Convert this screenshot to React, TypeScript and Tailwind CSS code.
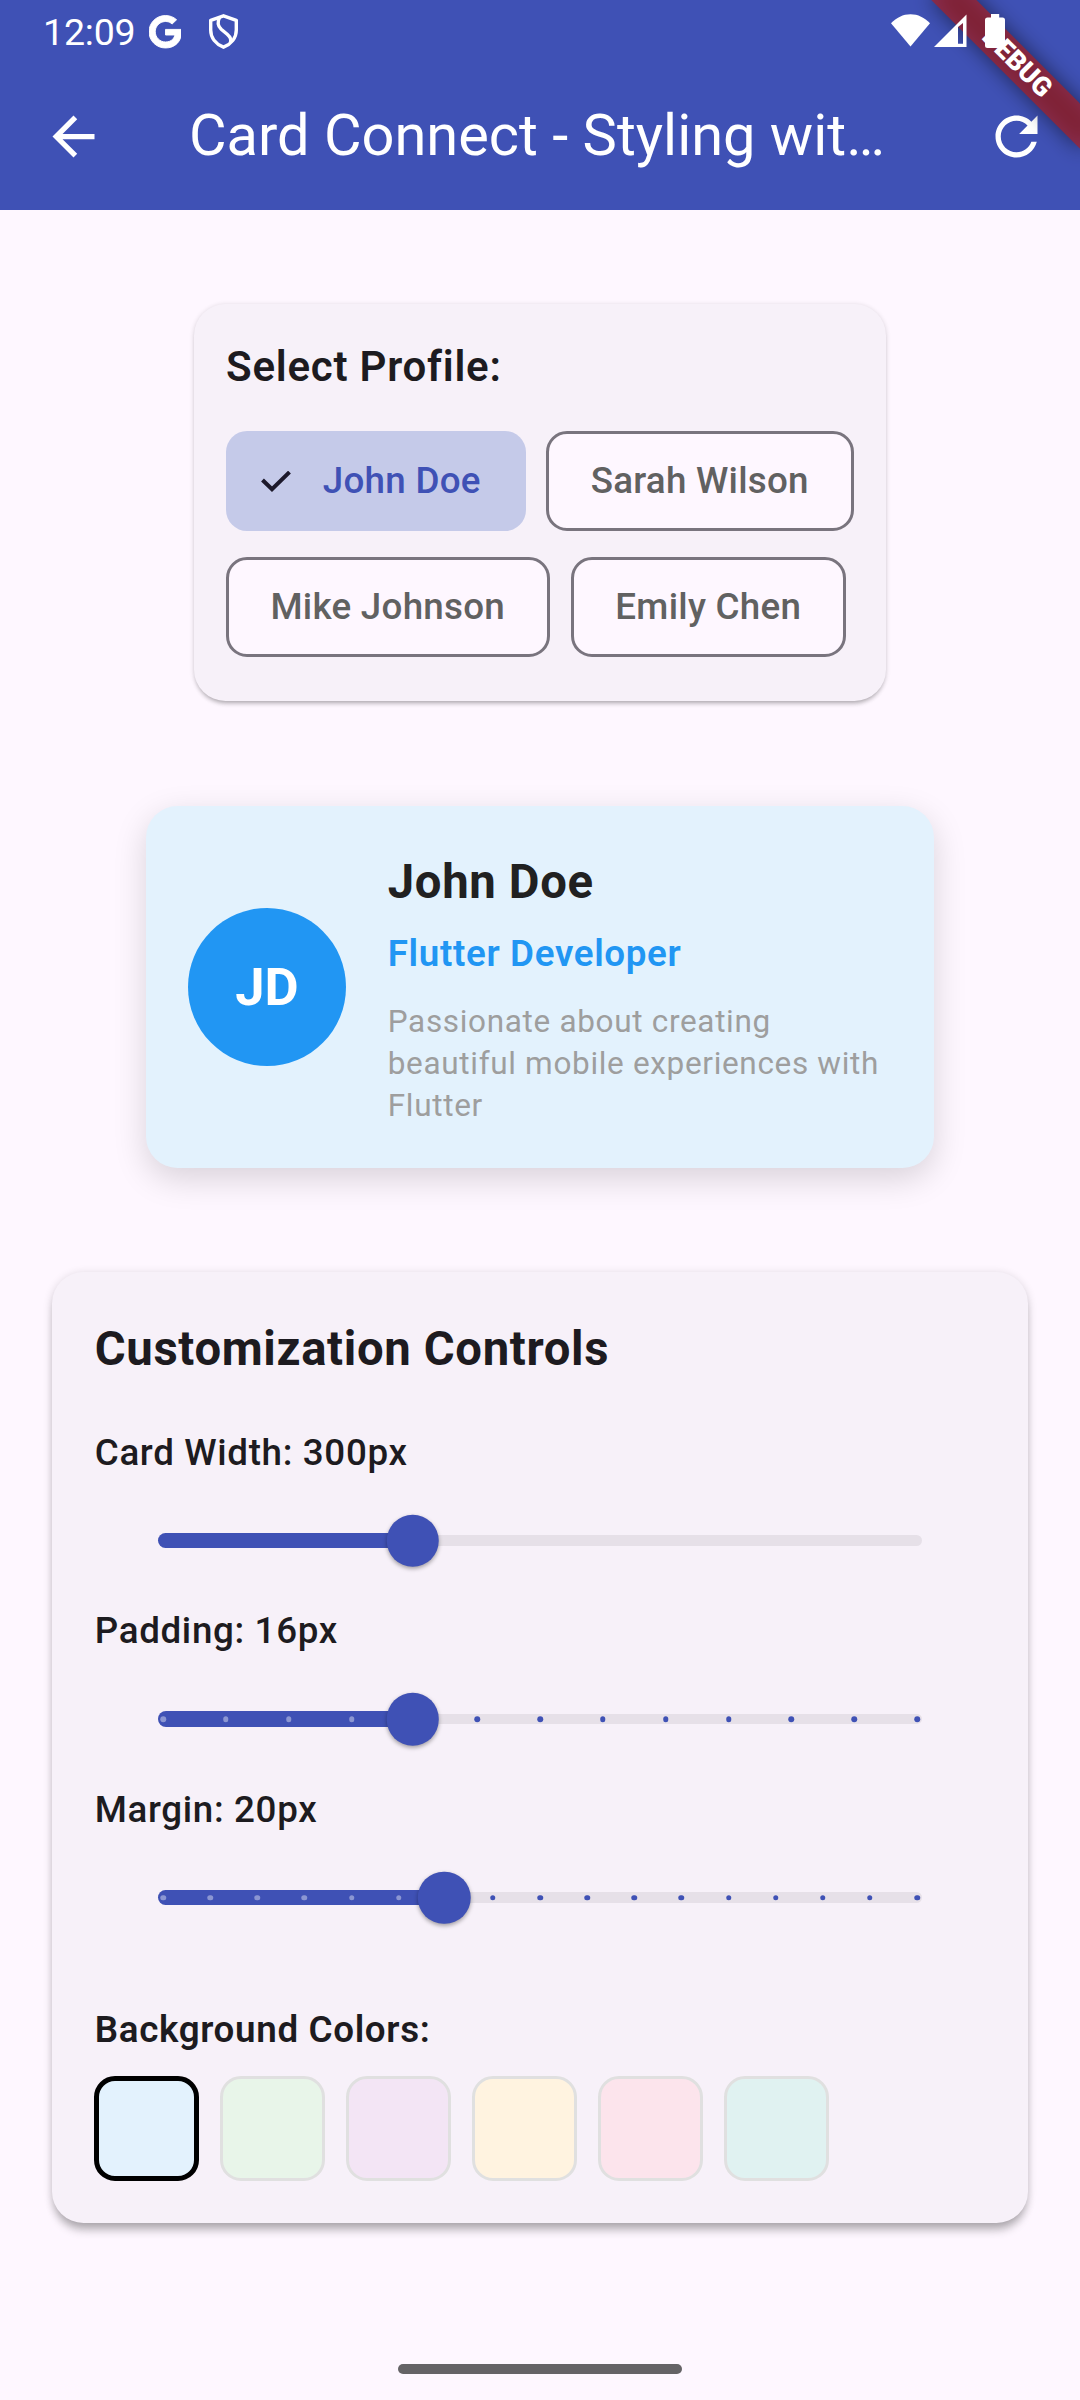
import React from "react";

function StatusBar() {
  return (
    <div className="absolute inset-x-0 top-0 z-30 flex h-[63px] items-start text-white">
      <div className="ml-[43px] mt-[10px] w-[94px] text-[37.5px] leading-[44px] tracking-[-0.2px] whitespace-nowrap">12:09</div>
      <svg className="ml-[11.5px] mt-[15px] h-[33.5px] w-[32.5px]" viewBox="0 0 488 512" preserveAspectRatio="none" fill="white" stroke="white" strokeWidth="14">
        <path d="M488 261.8C488 403.3 391.1 504 248 504 110.8 504 0 393.2 0 256S110.8 8 248 8c66.8 0 123 24.5 166.3 64.9l-67.5 64.9C258.5 52.6 94.3 116.6 94.3 256c0 86.5 69.1 156.6 153.7 156.6 98.2 0 135-70.4 140.8-106.9H248v-85.3h236.1c2.3 12.7 3.9 24.9 3.9 41.4z" />
      </svg>
      <svg className="ml-[27px] mt-[14px] h-[35px] w-[31px]" viewBox="0 0 31 35" fill="none" stroke="white" strokeWidth="3.4" strokeLinejoin="round">
        <path d="M15.5 1.8 L28.3 6.4 V16 C28.3 24 23 30.3 15.5 33.2 C8 30.3 2.7 24 2.7 16 V6.4 Z" />
        <path d="M11.6 3.2 C9.2 8 9.8 12 13.2 15.2 L19.2 20.2 C22.4 23 23.6 25.6 22.4 28.6" />
      </svg>
      <div className="ml-auto flex">
        <svg className="mt-[14px] h-[33px] w-[39px]" viewBox="0 0 39 33" fill="white">
          <path d="M19.5 32.5 L0 9.3 C5.5 3.5 12 0.2 19.5 0.2 S33.5 3.5 39 9.3 Z" />
        </svg>
        <svg className="ml-[4px] mt-[14px] h-[34px] w-[33px]" viewBox="0 0 33 34" fill="white">
          <path fillRule="evenodd" d="M0 33 L32.5 0.5 V33 Z M24 13 V29.8 H29 V8.9 Z" />
        </svg>
        <svg className="ml-[18px] mr-[75px] mt-[14px] h-[34px] w-[20px]" viewBox="0 0 20 34" fill="white">
          <path d="M6 0 H14.2 V3.5 H17.5 Q20 3.5 20 6 V31.5 Q20 34 17.5 34 H2.5 Q0 34 0 31.5 V6 Q0 3.5 2.5 3.5 H6 Z" />
        </svg>
      </div>
    </div>
  );
}

function DebugBanner() {
  return (
    <div className="pointer-events-none absolute right-0 top-0 z-20 h-[240px] w-[240px] overflow-hidden">
      <div className="absolute left-[71.9px] top-[47.35px] h-[31.5px] w-[210px] rotate-45">
        <div className="absolute inset-0 bg-black/50 blur-[10.4px]" />
        <div className="absolute inset-0 flex items-center justify-center bg-[#b71c1ca0] text-[26.8px] leading-none font-black text-white">
          DEBUG
        </div>
      </div>
    </div>
  );
}

function AppBar() {
  return (
    <header className="flex h-[210px] items-end bg-[#3f51b5] text-white">
      <div className="flex h-[147px] w-full items-center">
        <svg className="ml-[42px] h-[63px] w-[63px]" viewBox="0 0 24 24" fill="white">
          <path d="M20 11H7.83l5.59-5.59L12 4l-8 8 8 8 1.41-1.41L7.83 13H20v-2z" />
        </svg>
        <h1 className="mb-[2px] ml-[84px] text-[57.75px] leading-[73.5px] font-normal whitespace-nowrap">Card Connect - Styling wit…</h1>
        <svg className="mr-[32px] ml-auto h-[63px] w-[63px]" viewBox="0 0 24 24" fill="white">
          <path d="M17.65 6.35C16.2 4.9 14.21 4 12 4c-4.42 0-7.99 3.58-7.99 8s3.57 8 7.99 8c3.73 0 6.84-2.55 7.73-6h-2.08c-.82 2.33-3.04 4-5.65 4-3.31 0-6-2.69-6-6s2.69-6 6-6c1.66 0 3.14.69 4.22 1.78L13 11h7V4l-2.35 2.35z" />
        </svg>
      </div>
    </header>
  );
}

const chipBase =
  "flex h-[100px] items-center justify-center rounded-[21px] pt-[2px] text-[36.75px] leading-[52.5px] font-medium tracking-[0.26px] whitespace-nowrap";
const chipIdle = "border-[3px] border-[#79747e] bg-[#fef7ff] text-[#616161]";

function ProfileSelector() {
  return (
    <section className="mt-[94px] ml-[194px] h-[396.5px] w-[691.5px] rounded-[31.5px] bg-[#f7f1f9] px-[32px] pt-[32.5px] shadow-[0_5px_5px_-3px_rgba(0,0,0,0.24),0_1px_5px_rgba(0,0,0,0.16)]">
      <h2 className="text-[42px] leading-[60px] font-semibold tracking-[0.76px] text-[#1d1b20]">Select Profile:</h2>
      <div className="mt-[34px] flex flex-col gap-[26px]">
        <div className="flex gap-[20.5px]">
          <div className={`${chipBase} w-[299.5px] bg-[#c5cae9] text-[#3f51b5]`}>
            <svg className="mr-[32px] -ml-[10px] h-[22px] w-[30px]" viewBox="0 0 30 22" fill="none" stroke="#1d192b" strokeWidth="4">
              <path d="M1.5 9 L11 18.3 L28.5 1.1" />
            </svg>
            John Doe
          </div>
          <div className={`${chipBase} ${chipIdle} w-[307.5px]`}>Sarah Wilson</div>
        </div>
        <div className="flex gap-[21px]">
          <div className={`${chipBase} ${chipIdle} w-[323.5px]`}>Mike Johnson</div>
          <div className={`${chipBase} ${chipIdle} w-[275.5px]`}>Emily Chen</div>
        </div>
      </div>
    </section>
  );
}

function ProfileCard() {
  return (
    <section className="mx-auto mt-[105.5px] flex h-[362px] w-[787.5px] items-center gap-[42px] rounded-[31.5px] bg-[#e3f2fd] px-[42px] shadow-[0_10.5px_33px_rgba(0,0,0,0.15)]">
      <div className="flex size-[157.5px] shrink-0 items-center justify-center rounded-full bg-[#2196f3] text-[52.5px] leading-[75px] font-bold text-white">
        JD
      </div>
      <div className="min-w-0 flex-1 pt-[2px]">
        <div className="text-[47.25px] leading-[67.5px] font-bold tracking-[0.656px] text-[#212121]">John Doe</div>
        <div className="mt-[11.5px] text-[36.75px] leading-[52.5px] font-semibold tracking-[0.656px] text-[#2196f3]">Flutter Developer</div>
        <p className="mt-[20px] text-[31.5px] leading-[42px] tracking-[0.67px] whitespace-nowrap text-[#9e9e9e]">
          Passionate about creating
          <br />
          beautiful mobile experiences with
          <br />
          Flutter
        </p>
      </div>
    </section>
  );
}

interface SliderProps {
  label: string;
  fraction: number;
  divisions?: number;
}

function SliderRow({ label, fraction, divisions }: SliderProps) {
  const ticks = divisions ? Array.from({ length: divisions + 1 }, (_, i) => i / divisions) : [];
  return (
    <div className="h-[178.5px]">
      <div className="pt-[1px] text-[36.75px] leading-[52.5px] font-medium tracking-[0.656px]">{label}</div>
      <div className="mr-[63px] ml-[63px] flex h-[123px] items-center">
        <div className="relative h-[10.5px] w-[765px] rounded-full bg-[#e6e0e8]">
          <div className="absolute -top-[2.625px] left-0 h-[15.75px] rounded-full bg-[#3f51b5]" style={{ width: `${fraction * 100}%` }} />
          <div className="absolute inset-x-[5.25px] top-0 h-full">
            {ticks.map((t) => (
              <div
                key={t}
                className={`absolute top-1/2 size-[5.5px] -translate-x-1/2 -translate-y-1/2 rounded-full ${t < fraction ? "bg-white/40" : "bg-[#3f51b5]"}`}
                style={{ left: `${t * 100}%` }}
              />
            ))}
          </div>
          <div
            className="absolute top-1/2 size-[52.5px] -translate-x-1/2 -translate-y-1/2 rounded-full bg-[#3f51b5] shadow-[0_2px_4px_rgba(0,0,0,0.35)]"
            style={{ left: `${fraction * 100}%` }}
          />
        </div>
      </div>
    </div>
  );
}

const swatches = [
  "border-[5px] border-black bg-[#e3f2fd]",
  "border-[3px] border-[#e0e0e0] bg-[#e8f5e9]",
  "border-[3px] border-[#e0e0e0] bg-[#f3e5f5]",
  "border-[3px] border-[#e0e0e0] bg-[#fff3e0]",
  "border-[3px] border-[#e0e0e0] bg-[#fce4ec]",
  "border-[3px] border-[#e0e0e0] bg-[#e0f2f1]",
];

function CustomizationControls() {
  return (
    <section className="mx-auto mt-[104px] h-[951px] w-[975.5px] rounded-[31.5px] bg-[#f7f1f9] px-[42.5px] pt-[43px] text-[#1d1b20] shadow-[0_10px_10px_-3px_rgba(0,0,0,0.24),0_2px_10px_rgba(0,0,0,0.16)]">
      <h2 className="text-[47.25px] leading-[69px] font-bold tracking-[0.656px]">Customization Controls</h2>
      <div className="mt-[41.5px]">
        <SliderRow label="Card Width: 300px" fraction={1 / 3} />
        <SliderRow label="Padding: 16px" fraction={1 / 3} divisions={12} />
        <SliderRow label="Margin: 20px" fraction={0.375} divisions={16} />
      </div>
      <div className="mt-[43px] text-[36.75px] leading-[52.5px] font-semibold tracking-[0.656px]">Background Colors:</div>
      <div className="mt-[19.5px] -ml-[0.5px] flex gap-[21px]">
        {swatches.map((s) => (
          <div key={s} className={`size-[105px] rounded-[21px] ${s}`} />
        ))}
      </div>
    </section>
  );
}

export default function App() {
  return (
    <div className="relative h-[2400px] w-[1080px] overflow-hidden bg-[#fef7ff] font-['Roboto',sans-serif]">
      <StatusBar />
      <DebugBanner />
      <AppBar />
      <main>
        <ProfileSelector />
        <ProfileCard />
        <CustomizationControls />
      </main>
      <div className="mx-auto mt-[141px] h-[10px] w-[284px] rounded-full bg-[#656366]" />
    </div>
  );
}
